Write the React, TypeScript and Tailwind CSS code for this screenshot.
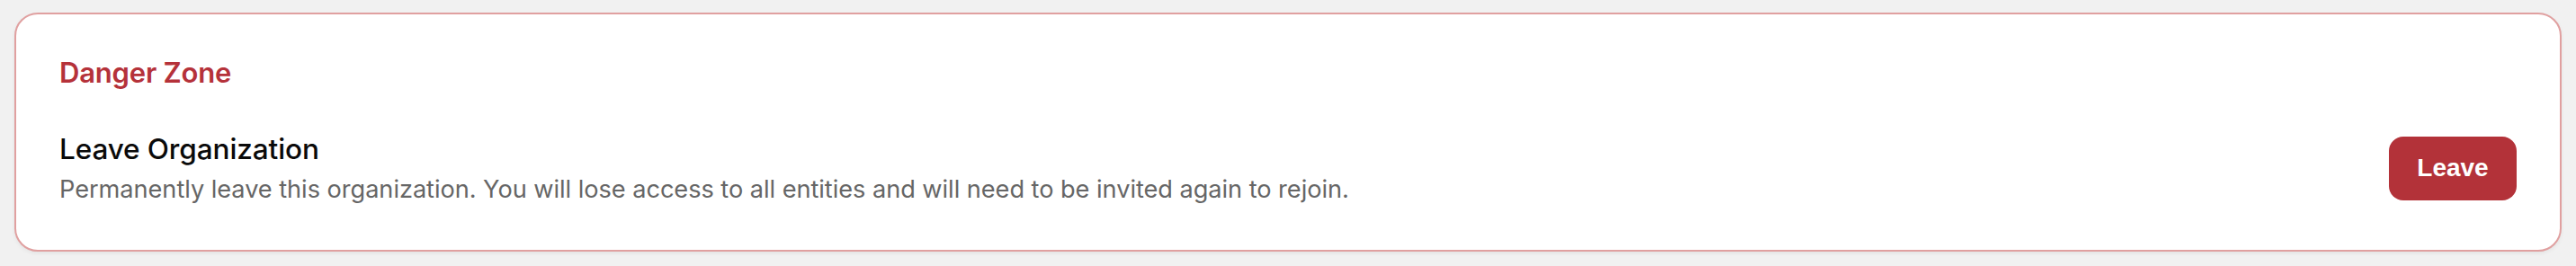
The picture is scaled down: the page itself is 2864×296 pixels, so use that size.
export default function App() {
  return (
    <div
      className="min-h-[296px] w-full bg-[#f1f1f1] px-4 pt-[14px]"
      style={{ fontFamily: "Inter, 'Noto Sans', sans-serif" }}
    >
      <div className="flex flex-col rounded-[26px] border-2 border-[#e0a0a0] bg-white px-[48px] pt-[41px] pb-[47px] shadow-[0_2px_4px_rgba(0,0,0,0.06)]">
        <h2 className="text-[31px] leading-[48px] font-semibold tracking-[-0.2px] text-[#b5323a]">
          Danger Zone
        </h2>

        <div className="mt-[38px] flex items-center justify-between">
          <div className="flex flex-col">
            <span className="text-[31.5px] leading-[46px] font-medium tracking-[-0.1px] text-[#0a0a0a]">
              Leave Organization
            </span>
            <span className="mt-[2px] text-[27.2px] leading-[40px] tracking-[-0.05px] text-[#666666]">
              Permanently leave this organization. You will lose access to all
              entities and will need to be invited again to rejoin.
            </span>
          </div>

          <button
            className="flex h-[71px] w-[142px] items-center justify-center rounded-[16px] bg-[#b33239] text-[28px] font-semibold text-white"
            style={{ fontFamily: "'Liberation Sans', Arial, sans-serif" }}
          >
            Leave
          </button>
        </div>
      </div>
    </div>
  );
}
